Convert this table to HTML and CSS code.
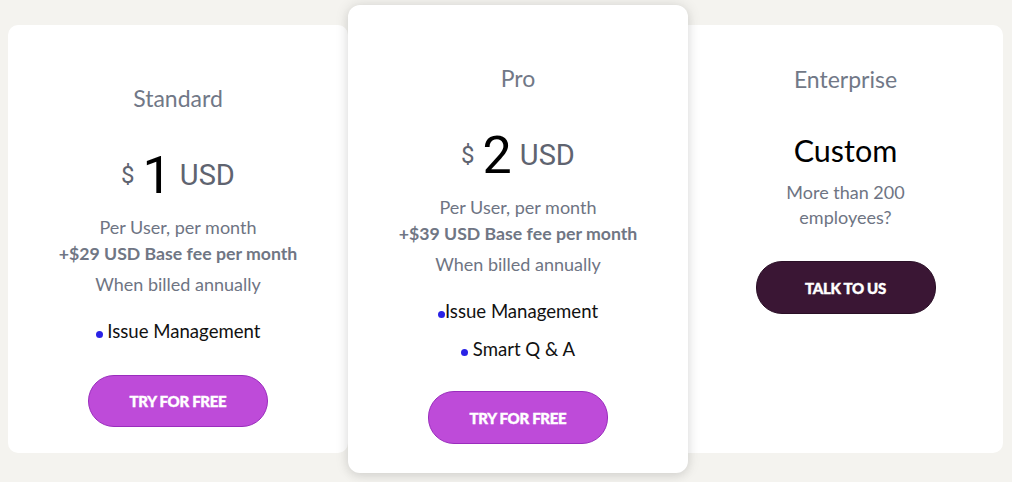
FILE: index.html
```html
<!DOCTYPE html>
<html lang="en">
<head>
<meta charset="utf-8">
<title>Pricing</title>
<link rel="stylesheet" href="styles.css">
</head>
<body>
<main class="plans">
  <section class="card card-standard">
    <h2 class="plan-name">Standard</h2>
    <div class="price"><span class="cur">$</span><span class="amount">1</span><span class="unit">USD</span></div>
    <p class="desc">Per User, per month<br><strong>+$29 USD Base fee per month</strong></p>
    <p class="billed">When billed annually</p>
    <ul class="features">
      <li><span class="dot"></span> Issue Management</li>
    </ul>
    <a class="btn btn-try" href="#">TRY FOR FREE</a>
  </section>
  <section class="card card-pro">
    <h2 class="plan-name">Pro</h2>
    <div class="price"><span class="cur">$</span><span class="amount">2</span><span class="unit">USD</span></div>
    <p class="desc">Per User, per month<br><strong>+$39 USD Base fee per month</strong></p>
    <p class="billed">When billed annually</p>
    <ul class="features">
      <li><span class="dot"></span>Issue Management</li>
      <li><span class="dot"></span> Smart Q &amp; A</li>
    </ul>
    <a class="btn btn-try" href="#">TRY FOR FREE</a>
  </section>
  <section class="card card-enterprise">
    <h2 class="plan-name">Enterprise</h2>
    <div class="custom">Custom</div>
    <p class="more">More than 200<br>employees?</p>
    <a class="btn btn-talk" href="#">TALK TO US</a>
  </section>
</main>
</body>
</html>
```

FILE: styles.css
```css
* { box-sizing: border-box; }
html, body { margin: 0; padding: 0; }
body {
  background: #f4f3ef;
  font-family: Lato, "Open Sans", sans-serif;
  width: 1012px;
  height: 482px;
  overflow: hidden;
}
.plans {
  display: flex;
  align-items: flex-start;
  padding: 5px 0 0 8px;
}
.card {
  background: #ffffff;
  display: flex;
  flex-direction: column;
  align-items: center;
  text-align: center;
}
.card-standard {
  width: 340px;
  height: 428px;
  margin-top: 20px;
  border-radius: 10px;
  padding-top: 61px;
}
.card-pro {
  width: 340px;
  height: 468px;
  border-radius: 12px;
  padding-top: 61px;
  position: relative;
  z-index: 2;
  box-shadow: 0 0 14px rgba(0, 0, 0, 0.12), 0 4px 10px rgba(0, 0, 0, 0.06);
}
.card-enterprise {
  width: 315px;
  height: 428px;
  margin-top: 20px;
  border-radius: 0 10px 10px 0;
  padding-top: 42px;
}
.plan-name {
  margin: 0;
  font-weight: 400;
  font-size: 23px;
  line-height: 24px;
  color: #717887;
}
.price {
  margin-top: 35px;
  height: 60px;
  display: flex;
  align-items: center;
  justify-content: center;
  gap: 6px;
  font-family: Roboto, "Liberation Sans", sans-serif;
}
.cur { font-size: 24px; color: #5f6470; margin-right: 2px; }
.amount { font-size: 52px; color: #000; margin-right: 2px; }
.unit { font-size: 29px; color: #5f6470; }
.desc {
  margin: 9px 0 0;
  font-size: 18px;
  line-height: 26px;
  color: #6e7483;
}
.desc strong { font-weight: 700; font-size: 17.7px; color: #707684; }
.billed {
  margin: 4px 0 0;
  font-size: 18px;
  line-height: 26px;
  color: #6e7483;
}
.features {
  list-style: none;
  margin: 22px 0 0;
  padding: 0;
  display: flex;
  flex-direction: column;
  align-items: center;
  gap: 14px;
}
.features li {
  font-size: 18.6px;
  line-height: 24px;
  color: #111;
}
.dot {
  display: inline-block;
  width: 7px;
  height: 7px;
  border-radius: 50%;
  background: #2a22e6;
  vertical-align: baseline;
}
.btn {
  display: flex;
  align-items: center;
  justify-content: center;
  width: 180px;
  height: 52px;
  border-radius: 26px;
  text-decoration: none;
  color: #fff;
  font-weight: 900;
  font-size: 15px;
  letter-spacing: -0.3px;
  -webkit-text-stroke: 0.4px #fff;
}
.btn-try {
  margin-top: 32px;
  background: #be4bd9;
  border: 1px solid #9a2dbd;
}
.card-pro .btn-try { margin-top: 30px; height: 53px; }
.btn-talk {
  margin-top: 31px;
  height: 53px;
  background: #3a1634;
  border: 1px solid #2a0f26;
}
.custom {
  margin-top: 41px;
  font-size: 30.5px;
  line-height: 36px;
  color: #000;
}
.more {
  margin: 12px 0 0;
  font-size: 18px;
  line-height: 25px;
  color: #6e7483;
}
```
